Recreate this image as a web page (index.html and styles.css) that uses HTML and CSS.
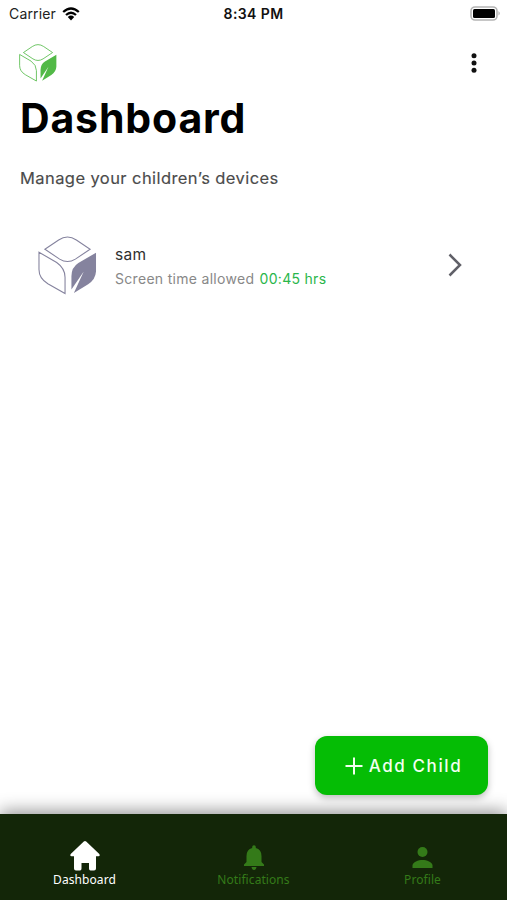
FILE: index.html
```html
<!DOCTYPE html>
<html lang="en">
<head>
<meta charset="utf-8">
<title>Dashboard</title>
<link rel="stylesheet" href="styles.css">
</head>
<body>
<svg class="symbols" aria-hidden="true">
  <symbol id="cube" viewBox="0 0 60 60">
    <path class="face" d="M7 13.500 L21 4 Q30 -2 39 4 L53 13.500 L38 23.500 Q30 28.500 22 23.500 Z"/>
    <path class="face" d="M1 16.500 L19 27 Q27.500 33 27.500 42 V58.500 L10 48.500 Q1 43 1 34 Z"/>
    <path class="leaf" d="M59 17 V36 Q58.500 44 51 49 L36.500 58 L46.500 36 L34 54.500 V41 Q34 32 41 27.500 Z"/>
  </symbol>
</svg>
<div class="screen">
  <header class="status">
    <div class="carrier"><span>Carrier</span>
      <svg class="wifi" viewBox="0 0 18 14"><path d="M1.200 5 Q9 -2 16.800 5 M4 8 Q9 3.600 14 8"/><path class="dot" d="M5.800 10 Q9 7.200 12.200 10 L9 13.500 Z"/></svg>
    </div>
    <time>8:34 PM</time>
    <svg class="battery" viewBox="0 0 31 15"><rect class="shell" x="1" y="1" width="26" height="13" rx="4"/><rect x="3" y="3" width="22" height="9" rx="1.500"/><path class="tip" d="M28.500 5 Q31 7.300 28.500 9.600 Z"/></svg>
  </header>
  <div class="toolbar">
    <svg class="logo"><use href="#cube"/></svg>
    <svg class="more" viewBox="0 0 6 20"><circle cx="3" cy="2.700" r="2.500"/><circle cx="3" cy="10" r="2.500"/><circle cx="3" cy="17.300" r="2.500"/></svg>
  </div>
  <main>
    <h1>Dashboard</h1>
    <p class="subtitle">Manage your children’s devices</p>
    <div class="child">
      <svg class="avatar"><use href="#cube"/></svg>
      <div class="info">
        <div class="name">sam</div>
        <div class="allowance">Screen time allowed <span>00:45 hrs</span></div>
      </div>
      <svg class="chevron" viewBox="0 0 14 24"><path d="M1.500 1.500 L12 12 L1.500 22.500"/></svg>
    </div>
  </main>
  <button class="add">
    <svg viewBox="0 0 18 18"><path d="M9 .5 V17.500 M.5 9 H17.500"/></svg><span>Add Child</span>
  </button>
  <nav>
    <div class="tab active"><svg class="home" viewBox="0 0 30 30"><path d="M13.800 .6 Q15 -.4 16.200 .6 L29.300 13 Q30.400 15 28.500 15.300 H26 V27.500 Q26 29.500 24 29.500 H20.500 Q19 29.500 19 27.500 V22 H11.500 V27.500 Q11.500 29.500 10 29.500 H6 Q4 29.500 4 27.500 V15.300 H1.500 Q-.4 15 .7 13 Z"/></svg><span>Dashboard</span></div>
    <div class="tab"><svg class="bell" viewBox="0 0 20 25"><path d="M8.200 2 A1.800 1.800 0 0 1 11.800 2 V3 Q17.500 4.500 17.500 11 V17 L20 19.500 V21 H0 V19.500 L2.500 17 V11 Q2.500 4.500 8.200 3 Z M7.500 22 H12.500 Q12 25 10 25 Q8 25 7.500 22 Z"/></svg><span>Notifications</span></div>
    <div class="tab"><svg class="person" viewBox="0 0 20 21"><circle cx="10" cy="5" r="5"/><path d="M0 21 V18.500 C0 15 6 13 10 13 C14 13 20 15 20 18.500 V21 Z"/></svg><span>Profile</span></div>
  </nav>
</div>
</body>
</html>
```
FILE: styles.css
```css
* { box-sizing: border-box; }
body { margin: 0; background: #fff; font-family: Inter, "Liberation Sans", sans-serif; }
svg { display: block; flex: none; }
.symbols { position: absolute; width: 0; height: 0; }
.screen { height: 900px; display: flex; flex-direction: column; overflow: hidden; }
.status { height: 27px; display: grid; grid-template-columns: 1fr auto 1fr; align-items: center; padding: 0 6px 0 9px; color: #222; font-size: 14px; }
.carrier { display: flex; align-items: center; gap: 6px; letter-spacing: .15px; }
.wifi { width: 18px; height: 14px; fill: none; stroke: #000; stroke-width: 2.3; }
.wifi .dot { fill: #000; stroke: none; }
.status time { font-weight: 600; letter-spacing: .4px; color: #111; padding-right: 3px; }
.battery { width: 31px; height: 15px; justify-self: end; }
.battery .shell { fill: #fff; stroke: #b4b4b4; stroke-width: 1.6; }
.battery .tip { fill: #aaa; }
.toolbar { height: 70px; display: flex; justify-content: space-between; align-items: center; padding: 1px 30px 0 19px; }
.logo { width: 38px; height: 38px; color: #52b947; stroke-width: 1.3px; }
.face { fill: none; stroke: currentColor; }
.leaf { fill: currentColor; }
.more { width: 6px; height: 20px; fill: #111; }
main { flex: 1; padding: 0 20px; }
h1 { margin: 0; font-size: 41px; line-height: 43px; letter-spacing: .85px; font-weight: 700; color: #000; }
.subtitle { margin: 26px 0 0; font-size: 16.5px; line-height: 24px; letter-spacing: .42px; color: #4b4b4b; -webkit-text-stroke: .15px; }
.child { margin-top: 45px; padding: 0 25px 0 18px; height: 60px; display: flex; align-items: center; }
.avatar { width: 59px; height: 59px; color: #85839e; stroke-width: 1.1px; }
.info { flex: 1; margin-left: 18px; padding-top: 3px; }
.name { font-size: 15.5px; line-height: 25px; letter-spacing: .3px; color: #303030; }
.allowance { font-size: 14px; line-height: 24px; letter-spacing: .3px; color: #888; }
.allowance span { color: #2ab64b; margin-left: 1px; }
.chevron { width: 14px; height: 24px; fill: none; stroke: #606068; stroke-width: 2.5; }
.add { align-self: flex-end; width: 173px; height: 59px; margin: 0 19px 19px 0; padding: 0 0 0 4px; border: 0; border-radius: 12px; display: flex; align-items: center; justify-content: center; gap: 6px; background: #05bd05; color: #f2fff0; font: 500 17px Inter, sans-serif; letter-spacing: 1.6px; box-shadow: 0 3px 7px rgba(0,0,0,.25); position: relative; z-index: 1; }
.add svg { width: 18px; height: 18px; fill: none; stroke: currentColor; stroke-width: 2; }
nav { height: 86px; display: grid; grid-template-columns: repeat(3, 1fr); background: #132608; box-shadow: 0 -3px 16px rgba(0,0,0,.42); color: #347a19; font: 12px "Noto Sans", sans-serif; }
.tab { display: flex; flex-direction: column; align-items: center; justify-content: flex-end; padding-bottom: 13px; gap: 1px; letter-spacing: .08px; }
.tab span { line-height: 15px; }
.active { color: #fff; }
.tab svg { fill: currentColor; }
.home { width: 30px; height: 30px; }
.bell { width: 20px; height: 25px; margin-bottom: 1px; }
.person { width: 21px; height: 21px; margin-bottom: 3px; }
```
